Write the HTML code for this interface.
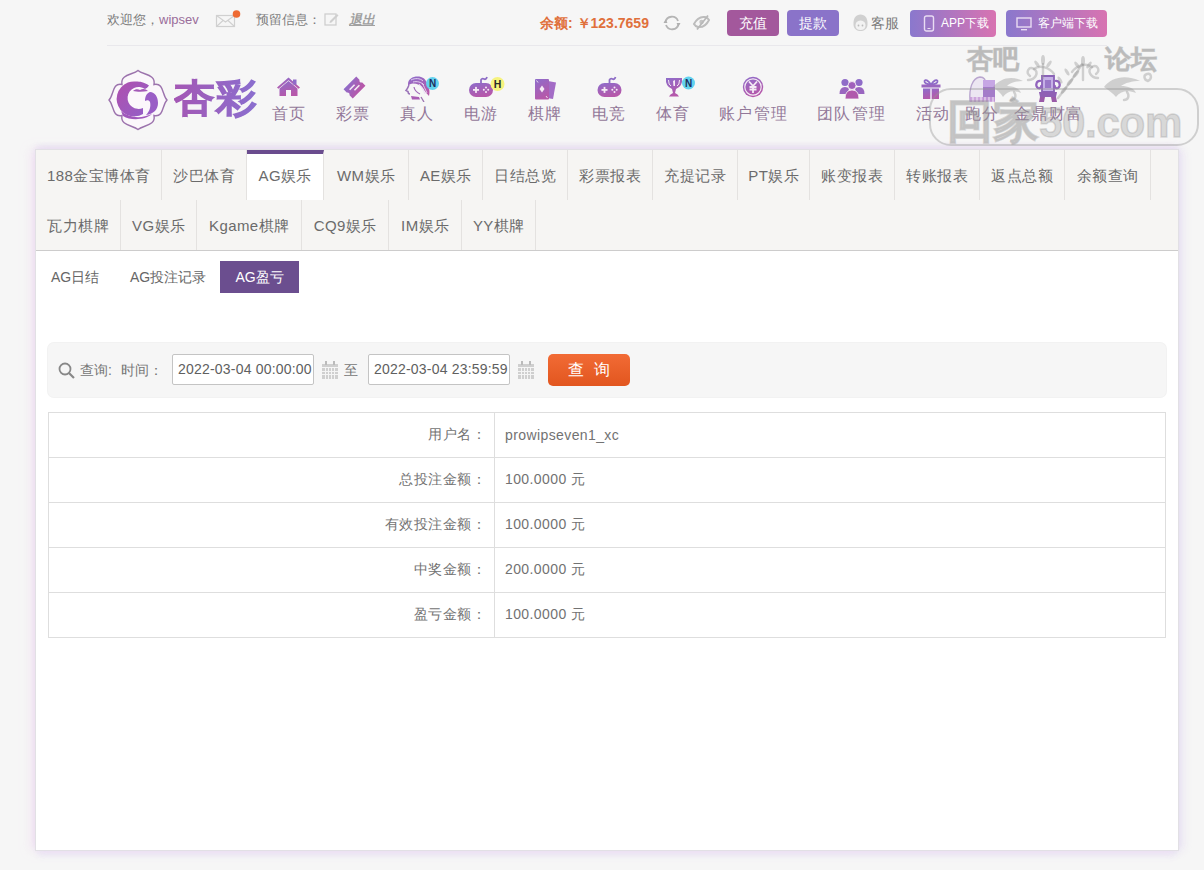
<!DOCTYPE html>
<html><head><meta charset="utf-8">
<style>
*{margin:0;padding:0;box-sizing:border-box}
html,body{width:1204px;height:870px;overflow:hidden}
body{position:relative;background:#f6f6f6;font-family:"Liberation Sans",sans-serif;color:#666}
.a{position:absolute;white-space:nowrap}
/* top bar */
.tb{font-size:13px;color:#7d7d7d;line-height:16px}
.topline{position:absolute;left:107px;top:45px;width:1000px;height:1px;background:#e9e8ec}
.btn{position:absolute;top:10px;height:26px;border-radius:4px;color:#fff;font-size:14px;line-height:26px;text-align:center}
/* nav */
.nav{position:absolute;top:105px;font-size:16px;line-height:18px;color:#937899;text-align:center;letter-spacing:.8px;text-indent:.8px}
.ico{position:absolute}
/* container */
.box{position:absolute;left:35px;top:149px;width:1144px;height:702px;background:#fff;border:1px solid #e2e0e5;box-shadow:-5px 0 9px -1px rgba(240,215,240,.55),5px 0 9px -1px rgba(226,218,242,.6),0 -3px 6px -1px rgba(225,215,240,.8),0 8px 6px -3px rgba(236,232,245,.95)}
.tabs{position:absolute;left:0;top:0;width:1142px;height:101px;background:#f6f5f3;border-bottom:1px solid #cdcccc}
.tab{position:absolute;height:50px;font-size:15px;line-height:51px;color:#6b6b6b;text-align:center;border-right:1px solid #e4e2e0;letter-spacing:.4px;text-indent:.4px}
.tab.act{background:#fff;border-top:4px solid #6a4c8e;line-height:43px}
.sub{position:absolute;top:111px;height:32px;font-size:14px;line-height:32px;color:#666;text-align:center}
.sub.act{background:#6b4e8f;color:#fff}
.sbar{position:absolute;left:12px;top:193px;width:1118px;height:54px;background:#f6f6f6;border-radius:6px;box-shadow:0 0 0 1px #f2f2f2}
.inp{position:absolute;top:11px;width:142px;height:31px;border:1px solid #c4c4c4;border-radius:2px;background:#fff;font-size:14px;line-height:29px;padding-left:5px;color:#606060;letter-spacing:.2px}
.qbtn{position:absolute;left:500px;top:11px;width:82px;height:32px;border-radius:5px;background:linear-gradient(#f26b35,#e2561f);color:#fff;font-size:16px;line-height:32px;text-align:center;letter-spacing:10px;text-indent:10px}
table{position:absolute;left:12px;top:262px;width:1118px;border-collapse:collapse}
td{border:1px solid #dedede;height:45px;font-size:14px;color:#727272}
td.l{width:446px;text-align:right;padding-right:8px;letter-spacing:.5px}
td.r{padding-left:10px;letter-spacing:.4px}
</style></head><body>

<!-- top bar -->
<div class="a tb" style="left:107px;top:12px">欢迎您，<span style="color:#9a6d9a">wipsev</span></div>
<svg class="ico" style="left:215px;top:9px" width="26" height="19" viewBox="0 0 26 19">
 <rect x="1.5" y="6.5" width="18" height="11" fill="none" stroke="#d0d0d0" stroke-width="1.2"/>
 <path d="M1.5 6.5 L10.5 13 L19.5 6.5 M1.5 17.5 L8 11.5 M19.5 17.5 L13 11.5" fill="none" stroke="#d0d0d0" stroke-width="1.1"/>
 <circle cx="21.5" cy="5" r="3.8" fill="#ee6a33"/>
</svg>
<div class="a tb" style="left:256px;top:12px">预留信息：</div>
<svg class="ico" style="left:324px;top:12px" width="16" height="15" viewBox="0 0 16 15">
 <rect x="1" y="2" width="11" height="11" fill="none" stroke="#cfcfcf" stroke-width="1.3"/>
 <path d="M6 9 L13 2 L14.5 3.5 L7.5 10.5 L5.5 11 Z" fill="#cfcfcf"/>
</svg>
<div class="a tb" style="left:349px;top:12px;font-style:italic;font-weight:bold;text-decoration:underline;color:#a0a0a0">退出</div>

<div class="a" style="left:540px;top:14px;font-size:14px;line-height:18px;font-weight:bold;color:#e0703c">余额: ￥123.7659</div>
<svg class="ico" style="left:663px;top:14px" width="18" height="18" viewBox="0 0 18 18">
 <path d="M2.5 8 A6.5 6.5 0 0 1 15 7" fill="none" stroke="#b5b5b5" stroke-width="1.8"/>
 <path d="M15.5 10 A6.5 6.5 0 0 1 3 11" fill="none" stroke="#b5b5b5" stroke-width="1.8"/>
 <path d="M0.5 9 L4.5 9 L2.5 5.5 Z" fill="#b0b0b0"/>
 <path d="M13.5 9 L17.5 9 L15.5 12.5 Z" fill="#b0b0b0"/>
</svg>
<svg class="ico" style="left:692px;top:14px" width="19" height="17" viewBox="0 0 19 17">
 <path d="M2 10 Q6 2 13 3 Q16 4 17 6 Q13 14 6 13 Q3 12 2 10 Z" fill="none" stroke="#bdbdbd" stroke-width="2"/>
 <circle cx="9.5" cy="8" r="2.2" fill="#c4c4c4"/>
 <path d="M16 1.5 L5 15.5" stroke="#b9b9b9" stroke-width="1.8"/>
</svg>
<div class="btn" style="left:727px;width:52px;background:#a3589c">充值</div>
<div class="btn" style="left:787px;width:52px;background:#8a73c9">提款</div>
<svg class="ico" style="left:852px;top:13px" width="17" height="19" viewBox="0 0 17 19">
 <path d="M1.5 12 C1 5 4 1.5 8.5 1.5 C13 1.5 16 5 15.5 12 C15 16 12 18 8.5 18 C5 18 2 16 1.5 12 Z" fill="#d0d0d0"/>
 <path d="M3.5 12.5 C3.5 9.5 5 8 8.5 7.5 C12 8 13.5 9.5 13.5 12.5 C13.5 15.5 11.5 17 8.5 17 C5.5 17 3.5 15.5 3.5 12.5 Z" fill="#f2f2f2"/>
 <circle cx="6.5" cy="12.5" r="0.9" fill="#bcbcbc"/><circle cx="10.5" cy="12.5" r="0.9" fill="#bcbcbc"/>
</svg>
<div class="a" style="left:871px;top:14px;font-size:14px;line-height:18px;color:#7a7a7a">客服</div>
<div class="btn" style="left:910px;width:86px;height:27px;background:linear-gradient(90deg,#8a78cd,#d873b1);font-size:12px;padding-left:31px;text-align:left">APP下载
 <svg style="position:absolute;left:13px;top:5px" width="12" height="17" viewBox="0 0 12 17"><rect x="1.5" y="1" width="9" height="15" rx="2" fill="none" stroke="#e9dcf3" stroke-width="1.4"/><rect x="4.5" y="13" width="3" height="1" fill="#e9dcf3"/></svg></div>
<div class="btn" style="left:1006px;width:101px;height:27px;background:linear-gradient(90deg,#8a78cd,#d873b1);font-size:12px;padding-left:32px;text-align:left">客户端下载
 <svg style="position:absolute;left:10px;top:7px" width="16" height="14" viewBox="0 0 16 14"><rect x="1" y="1" width="14" height="9" fill="none" stroke="#e9dcf3" stroke-width="1.4"/><rect x="5" y="12" width="6" height="1.4" fill="#e9dcf3"/></svg></div>
<div class="topline"></div>

<!-- logo -->
<svg class="ico" style="left:105px;top:66px" width="66" height="66" viewBox="0 0 66 66">
 <defs><linearGradient id="lg" x1="0" y1="0" x2="1" y2="1"><stop offset="0" stop-color="#b04fae"/><stop offset="1" stop-color="#9260c8"/></linearGradient></defs>
 <path d="M17 18.5 C15 8 28 9 33 4.5 C38 9 51 8 49 18.5 C59 16.5 57 29 62 34 C57 39 59 51.5 49 49.5 C51 60 38 59 33 63.5 C28 59 15 60 17 49.5 C7 51.5 9 39 4 34 C9 29 7 16.5 17 18.5 Z" fill="#fbf7fb" stroke="#9c73ad" stroke-width="1.4"/>
 <path d="M44 19.5 C39 16 35 15.5 31 15.5 A17.5 17.5 0 1 0 38 48 L38 42 A11 11 0 1 1 40 23 C42 22 43 21 44 19.5 Z" fill="url(#lg)"/>
 <path d="M45 26 C50 26 53 31 53 37 C53 43 49 48 41 49 C45 45 46 40 45 36 C44 34 42 34 40 35 C40 30 42 27 45 26 Z" fill="#9a5dc6"/>
 <path d="M16 45 C24 52 36 53 47 48 C40 54 26 55 18 50 Z" fill="#a058bc"/>
 <path d="M28 25 C30 23 33 23 35 24 C38 22 41 23 43 25 C38 26 32 26 28 25 Z" fill="#a45ab8"/>
</svg>
<div class="a" style="left:174px;top:74px;font-size:40px;line-height:46px;font-weight:bold;letter-spacing:2px;transform:scaleY(.94);transform-origin:0 41px;background:linear-gradient(90deg,#a457b4,#8a6fcf);-webkit-background-clip:text;background-clip:text;color:transparent;-webkit-text-stroke:1.2px transparent">杏彩</div>
<!-- nav -->
<div class="nav" style="left:271px;width:35px">首页</div>
<div class="nav" style="left:335px;width:35px">彩票</div>
<div class="nav" style="left:399px;width:35px">真人</div>
<div class="nav" style="left:463px;width:35px">电游</div>
<div class="nav" style="left:527px;width:35px">棋牌</div>
<div class="nav" style="left:591px;width:35px">电竞</div>
<div class="nav" style="left:655px;width:35px">体育</div>
<div class="nav" style="left:713px;width:80px;letter-spacing:1.6px;text-indent:1.6px">账户管理</div>
<div class="nav" style="left:811px;width:80px;letter-spacing:1.6px;text-indent:1.6px">团队管理</div>
<div class="nav" style="left:915px;width:35px">活动</div>
<div class="nav" style="left:964px;width:35px">跑分</div>
<div class="nav" style="left:1008px;width:80px;letter-spacing:1.6px;text-indent:1.6px">金鼎财富</div>

<svg width="0" height="0" style="position:absolute"><defs>
<linearGradient id="ig" x1="0" y1="0" x2="0.4" y2="1"><stop offset="0" stop-color="#8d6dcb"/><stop offset="1" stop-color="#b658aa"/></linearGradient>
</defs></svg>
<svg class="ico" style="left:276px;top:76px" width="26" height="21" viewBox="0 0 26 21">
 <path d="M1 11.5 L12.5 1.5 L24 11.5 L22.6 12.8 L12.5 4.2 L2.4 12.8 Z" fill="url(#ig)"/>
 <rect x="17" y="3.5" width="3.5" height="5" fill="#8f6bc8"/>
 <path d="M3.5 12.5 L12.5 5 L21.5 12.5 L21.5 20 L15 20 L15 14 L10 14 L10 20 L3.5 20 Z" fill="url(#ig)"/>
</svg>
<svg class="ico" style="left:342px;top:76px" width="25" height="23" viewBox="0 0 25 23">
 <g transform="rotate(-45 12.5 11.5)"><path d="M3.5 5 L21.5 5 L21.5 9.5 Q19 11.5 21.5 13.5 L21.5 18 L3.5 18 L3.5 13.5 Q6 11.5 3.5 9.5 Z" fill="url(#ig)"/>
 <rect x="7.5" y="8.8" width="7" height="1.6" fill="#f4eaf4"/><rect x="10.5" y="12.6" width="7" height="1.6" fill="#f4eaf4"/></g>
</svg>
<svg class="ico" style="left:403px;top:75px" width="36" height="27" viewBox="0 0 36 27">
 <path d="M5 9 C5 3 12 0.5 18 2 C23 3.5 24 8 25 11 C26.5 14 27 17 26 21 C24 19 21.5 16 20 13 C18 10 14 8.5 10 8.5 C8 8.5 6 9.5 5 11 Z" fill="url(#ig)"/>
 <path d="M8 5 C12 3 17 3 20 6 M10 7 C14 6 18 7 21 10 M19 8 C21 11 22 14 24 18 M16 9 C19 12 20 15 22 19" fill="none" stroke="#e8dcf4" stroke-width="0.9"/>
 <path d="M6 10 C5 12 5 13 3 15.5 L5 16.5 C5 18 5.5 19 7 19" fill="none" stroke="#9a72b8" stroke-width="1.5"/>
 <path d="M11 12 C11.5 15 13.5 17.5 17 19" fill="none" stroke="#a06ab8" stroke-width="1.2"/>
 <path d="M8 21 L16 22 L17 24.5 L9 24.5 Z" fill="#a95cb4"/>
 <path d="M18 22 L21 27" stroke="#9a72b0" stroke-width="1.3"/>
 <circle cx="29.5" cy="8.5" r="6.5" fill="#62d2ef"/>
 <text x="29.5" y="12.3" font-size="10" font-weight="bold" text-anchor="middle" fill="#1d2f5e" font-family="Liberation Sans">N</text>
</svg>
<svg class="ico" style="left:468px;top:75px" width="37" height="23" viewBox="0 0 37 23">
 <path d="M13 8 L13 5 Q14 3 16 4 Q18 5 19 2" fill="none" stroke="#8e6dc6" stroke-width="1.8"/>
 <rect x="1" y="8" width="24" height="14" rx="7" fill="url(#ig)"/>
 <rect x="5" y="14" width="6" height="1.8" fill="#f4eaf4"/><rect x="7.1" y="11.9" width="1.8" height="6" fill="#f4eaf4"/>
 <circle cx="18" cy="12.5" r="1" fill="#f4eaf4"/><circle cx="18" cy="17" r="1" fill="#f4eaf4"/><circle cx="15.8" cy="14.8" r="1" fill="#f4eaf4"/><circle cx="20.2" cy="14.8" r="1" fill="#f4eaf4"/>
 <circle cx="29.5" cy="9" r="7" fill="#f6f37e"/>
 <text x="29.5" y="12.8" font-size="10.5" font-weight="bold" text-anchor="middle" fill="#2a2a2a" font-family="Liberation Sans">H</text>
</svg>
<svg class="ico" style="left:534px;top:78px" width="24" height="23" viewBox="0 0 24 23">
 <path d="M14 3 L22 4.5 L19 21 L13 20 Z" fill="#a36cc6"/>
 <rect x="1" y="1" width="14" height="20.5" rx="1" fill="url(#ig)"/>
 <path d="M8 7.5 L10.5 11 L8 14.5 L5.5 11 Z" fill="#f4eaf4"/>
 <path d="M2.5 2.5 L4 4.5 M13.5 20 L12 18" stroke="#f4eaf4" stroke-width="0.9"/>
</svg>
<svg class="ico" style="left:597px;top:75px" width="25" height="23" viewBox="0 0 25 23">
 <path d="M12.5 8 L12.5 5 Q13.5 3 15.5 4 Q17.5 5 18.5 2" fill="none" stroke="#8e6dc6" stroke-width="1.8"/>
 <rect x="0.5" y="8" width="24" height="14" rx="7" fill="url(#ig)"/>
 <rect x="4.5" y="14" width="6" height="1.8" fill="#f4eaf4"/><rect x="6.6" y="11.9" width="1.8" height="6" fill="#f4eaf4"/>
 <circle cx="17.5" cy="12.5" r="1" fill="#f4eaf4"/><circle cx="17.5" cy="17" r="1" fill="#f4eaf4"/><circle cx="15.3" cy="14.8" r="1" fill="#f4eaf4"/><circle cx="19.7" cy="14.8" r="1" fill="#f4eaf4"/>
</svg>
<svg class="ico" style="left:664px;top:76px" width="32" height="22" viewBox="0 0 32 22">
 <path d="M2 2 L18 2 Q19 10 12 13 L11 17 Q14 18 15 20.5 L5 20.5 Q6 18 9 17 L8 13 Q1 10 2 2 Z" fill="url(#ig)"/>
 <path d="M4.5 4 Q4.5 9 7 10 M15.5 4 Q15.5 9 13 10" fill="none" stroke="#f4eaf4" stroke-width="1"/>
 <path d="M9 5 L11 4 L11 10 L9.5 10 Z" fill="#f4eaf4"/>
 <circle cx="24.5" cy="7" r="6.5" fill="#62d2ef"/>
 <text x="24.5" y="10.8" font-size="10" font-weight="bold" text-anchor="middle" fill="#1d2f5e" font-family="Liberation Sans">N</text>
</svg>
<svg class="ico" style="left:742px;top:76px" width="22" height="22" viewBox="0 0 22 22">
 <circle cx="11" cy="11" r="10.2" fill="url(#ig)"/>
 <circle cx="11" cy="11" r="8.2" fill="none" stroke="#f4eaf4" stroke-width="1.2"/>
 <path d="M7 5.5 L11 10 L15 5.5 M11 10 L11 17 M7.5 11 L14.5 11 M7.5 13.5 L14.5 13.5" fill="none" stroke="#f4eaf4" stroke-width="1.8"/>
</svg>
<svg class="ico" style="left:839px;top:78px" width="26" height="21" viewBox="0 0 26 21">
 <circle cx="6" cy="4.5" r="3.6" fill="#8f6cc8"/><circle cx="20" cy="4.5" r="3.6" fill="#8f6cc8"/>
 <path d="M0.5 16 Q0.5 9 6 9 Q9 9 10 11 L8 16 Z" fill="#9a66c0"/><path d="M25.5 16 Q25.5 9 20 9 Q17 9 16 11 L18 16 Z" fill="#9a66c0"/>
 <circle cx="13" cy="7.5" r="4" fill="#a060bc" stroke="#f6f5f6" stroke-width="0.8"/>
 <path d="M6 21 Q6 12 13 12 Q20 12 20 21 Z" fill="#b058ac" stroke="#f6f5f6" stroke-width="0.8"/>
</svg>
<svg class="ico" style="left:921px;top:77px" width="20" height="23" viewBox="0 0 20 23">
 <path d="M10 7.5 Q5 1 3.5 4 Q3 7 10 7.5 Q17 7 16.5 4 Q15 1 10 7.5Z" fill="none" stroke="#8f6cc8" stroke-width="1.8"/>
 <rect x="0.5" y="7.5" width="19" height="3" fill="#9a66c0"/>
 <rect x="2" y="11.5" width="16" height="10.5" fill="url(#ig)"/>
 <rect x="9.2" y="11.5" width="1.6" height="10.5" fill="#e9dff0"/>
</svg>
<svg class="ico" style="left:968px;top:75px" width="28" height="28" viewBox="0 0 28 28">
 <path d="M2 26 C1 14 4 3 12 2 C17 2 18 6 18 10 L18 26 Z" fill="#ece6f2" stroke="#b9a6cf" stroke-width="1.4"/>
 <path d="M15 5 L27 5 L27 26 L15 26 Z" fill="#a47cc9"/>
 <path d="M15 5 L27 5 L27 12 L15 12 Z" fill="#c6a6e4"/>
 <path d="M2 22 L27 22 L27 27 L2 27 Z" fill="#c79ad8" opacity=".85"/>
 <path d="M5 22 L5 27 M9 22 L9 27 M13 22 L13 27 M17 22 L17 27 M21 22 L21 27 M25 22 L25 27" stroke="#f2e8f6" stroke-width="1"/>
</svg>
<svg class="ico" style="left:1034px;top:75px" width="28" height="28" viewBox="0 0 28 28">
 <path d="M8 1 L20 1 L20 17 L8 17 Z" fill="#c5b0e6" stroke="#8a62b8" stroke-width="1.8"/>
 <path d="M11 5 L17 5 L17 13 L11 13 Z" fill="#9a78c8"/>
 <path d="M7 6 C2 5 1 11 4 13 C6 14 8 12 7 10 M21 6 C26 5 27 11 24 13 C22 14 20 12 21 10" fill="none" stroke="#9164bd" stroke-width="2.2"/>
 <path d="M5 17 L23 17 L22 22 L6 22 Z" fill="#8f5fb4"/>
 <path d="M6 22 L5 27 L10 27 L11 22 M22 22 L23 27 L18 27 L17 22" fill="#9a5aa8"/>
</svg>


<!-- container -->
<div class="box">
 <div class="tabs">
  <div class="tab" style="left:0;top:0;width:126px">188金宝博体育</div>
  <div class="tab" style="left:126px;top:0;width:85px">沙巴体育</div>
  <div class="tab act" style="left:211px;top:0;width:77px">AG娱乐</div>
  <div class="tab" style="left:288px;top:0;width:85px">WM娱乐</div>
  <div class="tab" style="left:373px;top:0;width:74px">AE娱乐</div>
  <div class="tab" style="left:447px;top:0;width:85px">日结总览</div>
  <div class="tab" style="left:532px;top:0;width:85px">彩票报表</div>
  <div class="tab" style="left:617px;top:0;width:85px">充提记录</div>
  <div class="tab" style="left:702px;top:0;width:72px">PT娱乐</div>
  <div class="tab" style="left:774px;top:0;width:85px">账变报表</div>
  <div class="tab" style="left:859px;top:0;width:85px">转账报表</div>
  <div class="tab" style="left:944px;top:0;width:85px">返点总额</div>
  <div class="tab" style="left:1029px;top:0;width:86px">余额查询</div>
  <div class="tab" style="left:0;top:50px;width:85px">瓦力棋牌</div>
  <div class="tab" style="left:85px;top:50px;width:76px">VG娱乐</div>
  <div class="tab" style="left:161px;top:50px;width:105px">Kgame棋牌</div>
  <div class="tab" style="left:266px;top:50px;width:87px">CQ9娱乐</div>
  <div class="tab" style="left:353px;top:50px;width:73px">IM娱乐</div>
  <div class="tab" style="left:426px;top:50px;width:74px">YY棋牌</div>
 </div>
 <div class="sub" style="left:12px;width:54px">AG日结</div>
 <div class="sub" style="left:87px;width:90px">AG投注记录</div>
 <div class="sub act" style="left:184px;width:79px">AG盈亏</div>

 <div class="sbar">
  <svg class="ico" style="left:10px;top:19px" width="18" height="17" viewBox="0 0 18 17"><circle cx="7" cy="7" r="5.5" fill="none" stroke="#888" stroke-width="1.8"/><path d="M11 11 L16 16" stroke="#888" stroke-width="2.2"/></svg>
  <div class="a" style="left:32px;top:19px;font-size:14px;line-height:16px;color:#777">查询:</div>
  <div class="a" style="left:73px;top:19px;font-size:14px;line-height:16px;color:#777">时间：</div>
  <div class="inp" style="left:124px">2022-03-04 00:00:00</div>
  <svg class="ico" style="left:274px;top:18px" width="16" height="18" viewBox="0 0 16 18"><g fill="#cfcfcf"><rect x="0" y="3" width="16" height="3"/><rect x="0" y="7" width="16" height="11"/></g><g fill="#f4f4f4"><rect x="3" y="7" width="1" height="11"/><rect x="6" y="7" width="1" height="11"/><rect x="9" y="7" width="1" height="11"/><rect x="12" y="7" width="1" height="11"/><rect x="0" y="10" width="16" height="1"/><rect x="0" y="13" width="16" height="1"/></g><g fill="#bbb"><rect x="3" y="0" width="2" height="4"/><rect x="11" y="0" width="2" height="4"/></g></svg>
  <div class="a" style="left:296px;top:19px;font-size:14px;line-height:16px;color:#777">至</div>
  <div class="inp" style="left:320px">2022-03-04 23:59:59</div>
  <svg class="ico" style="left:470px;top:18px" width="16" height="18" viewBox="0 0 16 18"><g fill="#cfcfcf"><rect x="0" y="3" width="16" height="3"/><rect x="0" y="7" width="16" height="11"/></g><g fill="#f4f4f4"><rect x="3" y="7" width="1" height="11"/><rect x="6" y="7" width="1" height="11"/><rect x="9" y="7" width="1" height="11"/><rect x="12" y="7" width="1" height="11"/><rect x="0" y="10" width="16" height="1"/><rect x="0" y="13" width="16" height="1"/></g><g fill="#bbb"><rect x="3" y="0" width="2" height="4"/><rect x="11" y="0" width="2" height="4"/></g></svg>
  <div class="qbtn">查询</div>
 </div>

 <table>
  <tr><td class="l">用户名：</td><td class="r">prowipseven1_xc</td></tr>
  <tr><td class="l">总投注金额：</td><td class="r">100.0000 元</td></tr>
  <tr><td class="l">有效投注金额：</td><td class="r">100.0000 元</td></tr>
  <tr><td class="l">中奖金额：</td><td class="r">200.0000 元</td></tr>
  <tr><td class="l">盈亏金额：</td><td class="r">100.0000 元</td></tr>
 </table>
</div>

<!-- watermark -->
<div style="position:absolute;left:0;top:0;width:1204px;height:160px;pointer-events:none">
 <div class="a" style="left:967px;top:42px;font-size:26px;line-height:34px;font-weight:bold;color:rgba(150,150,150,.38);-webkit-text-stroke:1px rgba(150,150,150,.38)">杏吧</div>
 <div class="a" style="left:1105px;top:42px;font-size:26px;line-height:34px;font-weight:bold;color:rgba(150,150,150,.38);-webkit-text-stroke:1px rgba(150,150,150,.38)">论坛</div>
 <svg class="ico" style="left:990px;top:50px" width="170" height="55" viewBox="0 0 170 55">
  <g fill="rgba(150,150,150,.4)" stroke="none">
   <path d="M3 37 C10 28 22 25 33 31 C26 31 20 33 17 36 C23 36 29 38 31 43 C24 40 17 41 13 47 C11 43 7 40 3 37 Z"/>
   <path d="M114 37 C121 27 136 24 150 31 C142 31 135 33 131 36 C138 36 144 38 146 43 C138 40 130 41 126 47 C123 43 118 40 114 37 Z"/>
   <ellipse cx="53" cy="10" rx="2" ry="5"/><ellipse cx="47" cy="14" rx="1.6" ry="4" transform="rotate(-35 47 14)"/><ellipse cx="59" cy="14" rx="1.6" ry="4" transform="rotate(35 59 14)"/>
   <ellipse cx="93" cy="11" rx="2" ry="5"/><ellipse cx="87" cy="15" rx="1.6" ry="4" transform="rotate(-35 87 15)"/><ellipse cx="99" cy="15" rx="1.6" ry="4" transform="rotate(35 99 15)"/>
   <ellipse cx="74" cy="40" rx="1.8" ry="4.5" transform="rotate(40 74 40)"/><ellipse cx="80" cy="32" rx="1.8" ry="4.5" transform="rotate(40 80 32)"/><ellipse cx="86" cy="24" rx="1.8" ry="4.5" transform="rotate(40 86 24)"/>
   <ellipse cx="70" cy="30" rx="1.6" ry="4" transform="rotate(-30 70 30)"/><ellipse cx="77" cy="22" rx="1.6" ry="4" transform="rotate(-30 77 22)"/>
  </g>
  <g fill="none" stroke="rgba(150,150,150,.4)" stroke-width="2.4" stroke-linecap="round">
   <path d="M40 26 C35 22 39 16 44 19 C49 22 46 30 38 30"/>
   <path d="M44 19 C50 14 60 18 64 24"/>
   <path d="M106 24 C111 20 107 14 102 17 C97 20 100 28 108 28"/>
   <path d="M102 17 C96 12 86 16 82 22"/>
   <path d="M53 14 L53 28 M93 15 L93 30"/>
   <path d="M68 48 C76 38 84 28 92 14"/>
   <path d="M158 31 C163 28 161 23 157 24 C153 25 154 30 158 31"/>
   <path d="M24 42 C27 46 25 50 21 50"/>
   <path d="M137 42 C140 46 138 50 134 50"/>
  </g>
 </svg>
 <div style="position:absolute;left:929px;top:88px;width:270px;height:58px;border:2px solid rgba(150,150,150,.4);border-radius:22px"></div>
 <div class="a" style="left:947px;top:97px;font-size:46px;line-height:48px;font-weight:bold;color:rgba(150,150,150,.33);-webkit-text-stroke:1.5px rgba(150,150,150,.33)">回家<span style="font-size:42px;letter-spacing:-0.3px">50.com</span></div>
</div>

</body></html>
